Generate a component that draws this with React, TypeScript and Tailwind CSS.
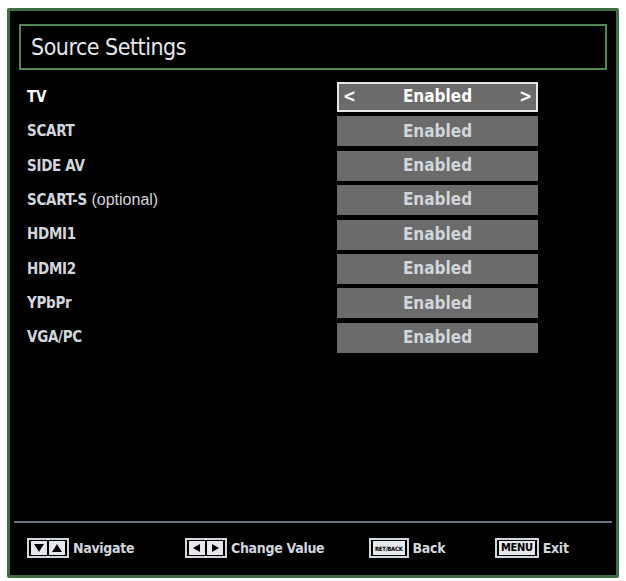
export default function App() {
  const rows = ["TV", "SCART", "SIDE AV", "SCART-S", "HDMI1", "HDMI2", "YPbPr", "VGA/PC"];
  const cond = { fontFamily: '"DejaVu Sans Condensed", "Liberation Sans", sans-serif' };
  const Key = ({ children }: { children: React.ReactNode }) => (
    <span className="flex items-center gap-[2px] border-2 border-gray-300 px-[2px] h-[20px]">{children}</span>
  );
  const Sq = ({ d }: { d: string }) => (
    <span className="w-[16px] h-[14px] bg-gray-200 flex items-center justify-center">
      <svg width="10" height="8" viewBox="0 0 10 8"><path d={d} fill="#000" /></svg>
    </span>
  );
  return (
    <div className="w-[626px] h-[581px] bg-white pt-[8px] pl-[7px]" style={cond}>
      <div className="w-[612px] h-[570px] bg-black border-[3px] border-[#3f6e45] rounded-[2px] flex flex-col px-[9px] pt-[13px] pb-[2px]">
        <div className="h-[46px] border-2 border-[#4f8a55] flex items-center px-[10px] text-[23px] text-gray-200 tracking-[-0.5px]">Source Settings</div>
        <div className="flex flex-col gap-[4.4px] mt-[12px] pl-[8px]">
          {rows.map((r, i) => (
            <div key={r} className="flex items-center h-[30px]">
              <div className={`w-[310px] text-[15px] font-bold tracking-[-0.3px] ${i === 0 ? "text-white" : "text-gray-300"}`}>
                {r}
                {r === "SCART-S" && <span className="font-normal text-[16px] tracking-normal" style={{ fontFamily: '"Liberation Sans", sans-serif' }}> (optional)</span>}
              </div>
              <div className={`w-[201px] h-[30px] bg-[#6b6b6b] flex items-center justify-between px-[4px] text-[17px] font-bold text-gray-300 ${i === 0 ? "border-2 border-gray-200 text-white" : ""}`}>
                <span>{i === 0 ? "<" : ""}</span>
                <span>Enabled</span>
                <span>{i === 0 ? ">" : ""}</span>
              </div>
            </div>
          ))}
        </div>
        <div className="flex-1" />
        <div className="h-[2px] bg-gray-500 -mx-[5px]" />
        <div className="flex items-center h-[50px] text-[14px] font-bold text-gray-300 pl-[8px] tracking-[-0.3px]">
          <div className="flex items-center w-[158px]"><Key><Sq d="M0 0H10L5 8Z" /><Sq d="M0 8H10L5 0Z" /></Key><span className="ml-[4px]">Navigate</span></div>
          <div className="flex items-center w-[184px]"><Key><Sq d="M8 0V8L1 4Z" /><Sq d="M2 0V8L9 4Z" /></Key><span className="ml-[4px]">Change Value</span></div>
          <div className="flex items-center w-[126px]"><Key><span className="bg-gray-200 text-black text-[6px] px-[2px] h-[14px] flex items-center">RET/BACK</span></Key><span className="ml-[4px]">Back</span></div>
          <div className="flex items-center"><Key><span className="bg-gray-200 text-black text-[11px] px-[2px] h-[14px] flex items-center">MENU</span></Key><span className="ml-[4px]">Exit</span></div>
        </div>
      </div>
    </div>
  );
}
